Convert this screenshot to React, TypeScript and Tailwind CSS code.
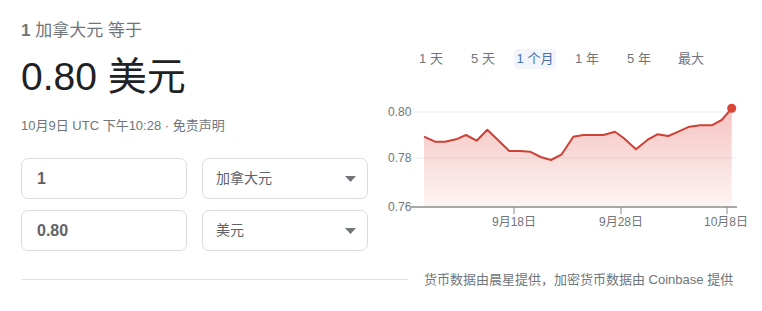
import { useState } from "react"

const tabs = ["1 天", "5 天", "1 个月", "1 年", "5 年", "最大"]

const points: [number, number][] = [
  [44, 41.7], [55, 46.7], [65, 46.7], [76, 44.3], [86, 40], [96.7, 45.7], [107.3, 34.7],
  [129.3, 56], [140, 56], [150, 56.7], [160.7, 62], [171, 65], [181.7, 59.3], [193.3, 41.7],
  [203.3, 40], [223.3, 40], [235, 36.7], [243.3, 42.7], [256, 54.3], [268.3, 44.3],
  [277.3, 39.3], [288.3, 41], [298.3, 36.7], [309.3, 31.7], [320, 30.3], [331.7, 30.3],
  [341.7, 25], [351.7, 13.3],
]

function Caret() {
  return (
    <svg width="11" height="6" viewBox="0 0 11 6">
      <path d="M0 0h11L5.5 6z" fill="#70757a" />
    </svg>
  )
}

function Chart() {
  const line = points.map(([x, y]) => `${x},${y}`).join(" ")
  const first = points[0]
  const last = points[points.length - 1]
  const area = `${first[0]},112 ${line} ${last[0]},112`

  return (
    <svg width="382" height="145" viewBox="0 0 382 145" className="block">
      <defs>
        <linearGradient id="fill" x1="0" y1="0" x2="0" y2="1">
          <stop offset="0" stopColor="#e0554b" stopOpacity="0.35" />
          <stop offset="1" stopColor="#e0554b" stopOpacity="0.06" />
        </linearGradient>
      </defs>
      <g fill="#70757a" fontSize="12">
        <text x="8" y="21">0.80</text>
        <text x="8" y="67">0.78</text>
        <text x="8" y="116">0.76</text>
      </g>
      <line x1="32" y1="17" x2="356" y2="17" stroke="#ececec" />
      <line x1="32" y1="63" x2="356" y2="63" stroke="#ececec" />
      <polygon points={area} fill="url(#fill)" />
      <polyline points={line} fill="none" stroke="#cf4035" strokeWidth="2" strokeLinejoin="round" />
      <circle cx={last[0]} cy={last[1]} r="4.5" fill="#db4437" />
      <line x1="30" y1="112" x2="357" y2="112" stroke="#a9a9a9" strokeWidth="2" />
      <g stroke="#8a8a8a">
        <line x1="134" y1="112" x2="134" y2="119" />
        <line x1="241" y1="112" x2="241" y2="119" />
        <line x1="347" y1="112" x2="347" y2="119" />
      </g>
      <g fill="#70757a" fontSize="12" textAnchor="middle">
        <text x="134" y="131">9月18日</text>
        <text x="241" y="131">9月28日</text>
        <text x="346" y="131">10月8日</text>
      </g>
    </svg>
  )
}

export default function App() {
  const [active, setActive] = useState(2)

  return (
    <div
      className="h-[311px] w-[762px] overflow-hidden bg-white"
      style={{ fontFamily: '"Liberation Sans", Arial, "Noto Sans CJK SC", sans-serif' }}
    >
      <div className="flex">
        <div className="w-[380px] pl-[21px] pt-[19px]">
          <div className="text-[17px] leading-[24px] text-[#70757a]">
            <span className="font-bold">1</span> 加拿大元 等于
          </div>
          <div className="mt-[10px] text-[39px] leading-[48px] text-[#202124]">0.80 美元</div>
          <div className="mt-[16px] text-[13px] leading-[18px] text-[#70757a]">
            10月9日 UTC 下午10:28 · 免责声明
          </div>

          <div className="mt-[23px] grid w-[347px] grid-cols-2 gap-x-[15px] gap-y-[11px]">
            <div className="flex h-[41px] items-center rounded-[7px] border border-[#dadce0] pl-[15px] text-[16px] font-bold text-[#5f6368]">
              1
            </div>
            <div className="flex h-[41px] items-center justify-between rounded-[7px] border border-[#dadce0] pl-[13px] pr-[11px] text-[14px] text-[#5f6368]">
              <span>加拿大元</span>
              <Caret />
            </div>
            <div className="flex h-[41px] items-center rounded-[7px] border border-[#dadce0] pl-[15px] text-[16px] font-bold text-[#5f6368]">
              0.80
            </div>
            <div className="flex h-[41px] items-center justify-between rounded-[7px] border border-[#dadce0] pl-[13px] pr-[11px] text-[14px] text-[#5f6368]">
              <span>美元</span>
              <Caret />
            </div>
          </div>
        </div>

        <div className="flex-1 pt-[46px]">
          <div className="ml-[25px] flex">
            {tabs.map((tab, i) => (
              <button
                key={tab}
                onClick={() => setActive(i)}
                className="flex h-[26px] w-[52px] items-center justify-center text-[13px]"
              >
                <span
                  className={
                    i === active
                      ? "rounded-[4px] bg-[#f2f5fb] px-[3px] text-[#4b6fa8]"
                      : "text-[#70757a]"
                  }
                >
                  {tab}
                </span>
              </button>
            ))}
          </div>
          <div className="mt-[23px]">
            <Chart />
          </div>
        </div>
      </div>

      <div className="mt-[19px] flex items-center pl-[21px]">
        <div className="h-px w-[387px] bg-[#e3e3e3]" />
        <div className="ml-[16px] text-[13px] text-[#70757a]">
          货币数据由晨星提供，加密货币数据由 Coinbase 提供
        </div>
      </div>
    </div>
  )
}
